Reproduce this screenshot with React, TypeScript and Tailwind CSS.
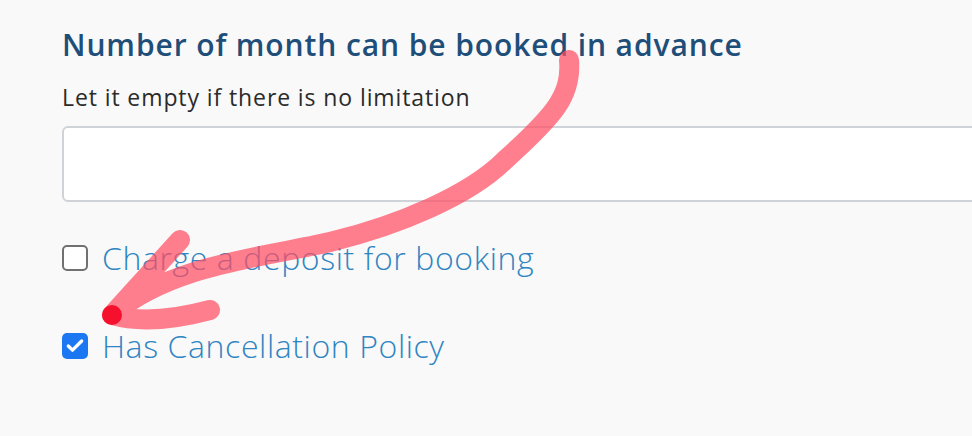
import { Check } from 'lucide-react';

const font = { fontFamily: '"Open Sans", Lato, sans-serif' };

function Checkbox({ checked }: { checked: boolean }) {
  if (checked) {
    return (
      <span className="flex items-center justify-center w-[26px] h-[26px] rounded-[5px] bg-[#1b77f2] shrink-0">
        <Check className="w-[20px] h-[20px] text-white" strokeWidth={4} />
      </span>
    );
  }
  return <span className="block w-[26px] h-[26px] rounded-[5px] border-2 border-[#717171] bg-white shrink-0" />;
}

function PointerArrow() {
  // hand-drawn annotation sitting on top of the form
  return (
    <svg className="absolute inset-0 w-full h-full pointer-events-none" viewBox="0 0 972 436">
      <g opacity={0.72} stroke="#ff4d63" strokeWidth={20} strokeLinecap="round" strokeLinejoin="round" fill="none">
        <path d="M569,60 C572,95 555,115 505,160 C470,195 400,225 330,242 C260,258 170,265 112,315 L180,240 M112,315 Q150,326 210,310" />
      </g>
      <circle cx={112} cy={315} r={10} fill="#f5102d" />
    </svg>
  );
}

export default function App() {
  return (
    <div className="relative w-[972px] h-[436px] overflow-hidden bg-[#f9f9f9]" style={font}>
      <div className="pl-[62px] pt-[26px]">
        <h2 className="text-[30px] leading-[38px] font-semibold tracking-[0.9px] text-[#1f4e79]">
          Number of month can be booked in advance
        </h2>
        <p className="mt-[19px] text-[23px] leading-[28px] tracking-[0.9px] text-[#2b2b2b]">
          Let it empty if there is no limitation
        </p>
        <input
          type="text"
          className="mt-[15px] block w-[940px] h-[76px] rounded-[6px] border-2 border-[#cfd3d8] bg-white"
        />
        <label className="mt-[38px] flex items-center gap-[14px]">
          <Checkbox checked={false} />
          <span className="text-[32px] leading-[36px] font-light tracking-[0.6px] text-[#2f85c2]">
            Charge a deposit for booking
          </span>
        </label>
        <label className="mt-[52px] flex items-center gap-[14px]">
          <Checkbox checked />
          <span className="text-[32px] leading-[36px] font-light tracking-[0.6px] text-[#2f85c2]">
            Has Cancellation Policy
          </span>
        </label>
      </div>
      <PointerArrow />
    </div>
  );
}
